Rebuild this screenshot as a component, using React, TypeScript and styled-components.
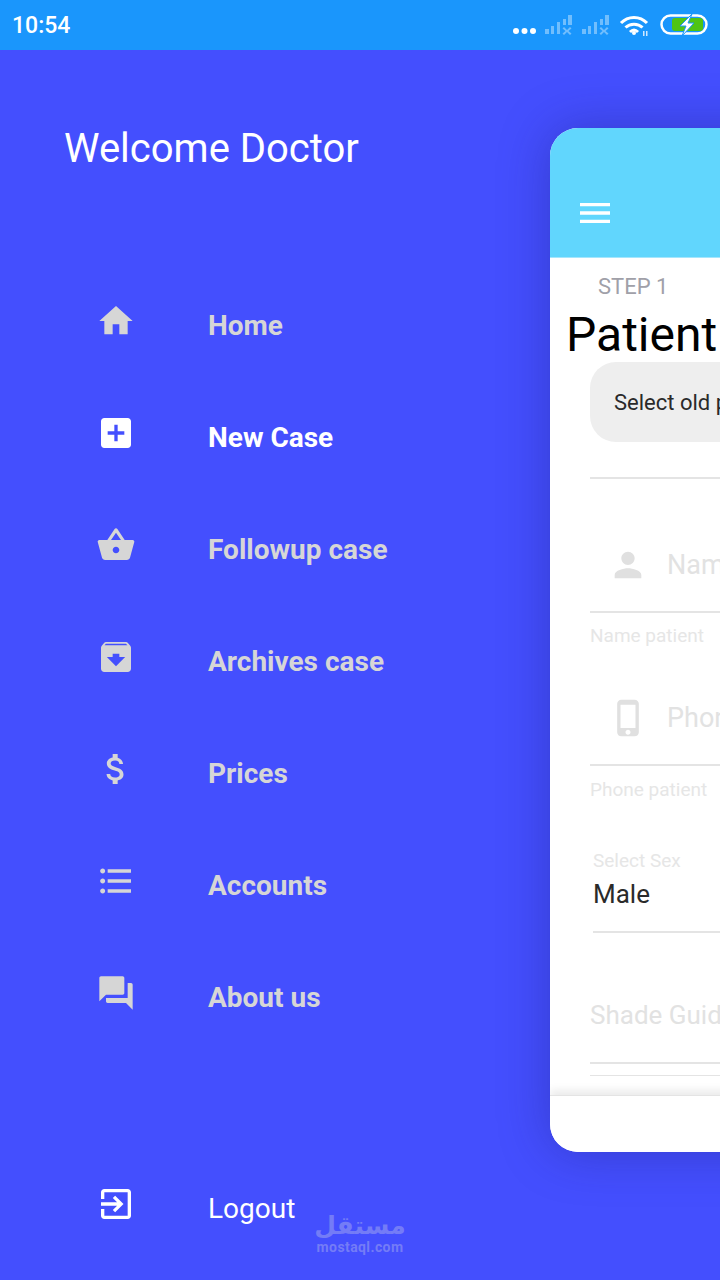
import styled, { createGlobalStyle } from 'styled-components';

const GlobalStyle = createGlobalStyle`
  html, body {
    margin: 0;
    padding: 0;
    background: #444ffe;
  }
  * {
    box-sizing: border-box;
  }
`;

const Screen = styled.div`
  position: relative;
  width: 720px;
  height: 1280px;
  overflow: hidden;
  background: #444ffe;
  font-family: Roboto, sans-serif;
`;

const StatusBar = styled.div`
  display: flex;
  align-items: center;
  justify-content: space-between;
  height: 50px;
  padding: 0 12px 0 12px;
  background: #1a96fc;
`;

const Clock = styled.span`
  color: #fff;
  font-size: 23px;
  font-weight: 500;
`;

const Drawer = styled.div`
  display: flex;
  flex-direction: column;
  padding: 74px 0 0 64px;
`;

const Welcome = styled.h1`
  margin: 0 0 95px;
  color: #fff;
  font-size: 40px;
  font-weight: 400;
  line-height: 50px;
`;

const Nav = styled.nav`
  display: flex;
  flex-direction: column;
  margin-left: 32px;
`;

const NavItem = styled.div<{ $last?: boolean }>`
  display: flex;
  align-items: center;
  gap: 72px;
  height: 112px;
  margin-top: ${(p) => (p.$last ? '99px' : '0')};
`;

const NavIcon = styled.svg<{ $active?: boolean }>`
  width: 40px;
  height: 40px;
  flex: none;
  margin-top: -8px;
  fill: ${(p) => (p.$active ? '#fff' : '#d6d6d6')};
`;

const NavLabel = styled.span<{ $active?: boolean }>`
  color: ${(p) => (p.$active ? '#fff' : '#d6d6d6')};
  font-size: 28px;
  font-weight: 700;
`;

const LogoutLabel = styled.span`
  color: #fff;
  font-size: 28px;
  font-weight: 400;
`;

const Card = styled.div`
  position: absolute;
  top: 128px;
  left: 550px;
  display: flex;
  flex-direction: column;
  width: 720px;
  height: 1024px;
  overflow: hidden;
  border-radius: 28px;
  background: #fff;
  box-shadow: 0 0 50px rgba(30, 30, 130, 0.4);
`;

const CardHeader = styled.div`
  display: flex;
  align-items: flex-end;
  flex: none;
  height: 130px;
  padding: 0 0 24px 25px;
  background: #61d6fd;
  border-bottom: 1px solid #a5e6fd;
`;

const MenuIcon = styled.svg`
  width: 40px;
  height: 40px;
  fill: #fff;
`;

const CardBody = styled.div`
  display: flex;
  flex-direction: column;
  flex: 1;
  padding-left: 40px;
`;

const Step = styled.div`
  margin: 15px 0 0 8px;
  color: #a0a0a8;
  font-size: 22px;
  line-height: 28px;
`;

const Title = styled.div`
  margin: 4px 0 0 -24px;
  color: #000;
  font-size: 48px;
  line-height: 60px;
  white-space: nowrap;
`;

const OldPatient = styled.div`
  display: flex;
  align-items: center;
  height: 80px;
  margin-top: -3px;
  padding-left: 24px;
  border-radius: 26px;
  background: #eee;
  color: #2a2a2a;
  font-size: 22px;
  white-space: nowrap;
`;

const Rule = styled.div<{ $top: number; $thin?: boolean }>`
  flex: none;
  height: ${(p) => (p.$thin ? 1 : 2)}px;
  margin-top: ${(p) => p.$top}px;
  background: #e4e4e4;
`;

const InputRow = styled.div<{ $top: number }>`
  display: flex;
  align-items: center;
  gap: 19px;
  height: 56px;
  margin-top: ${(p) => p.$top}px;
  padding-left: 18px;
  white-space: nowrap;
`;

const InputIcon = styled.svg`
  width: 40px;
  height: 40px;
  flex: none;
  fill: #e0e0e0;
`;

const Placeholder = styled.span`
  color: #e2e2e2;
  font-size: 27px;
`;

const HelperText = styled.div<{ $top: number; $indent?: number }>`
  margin: ${(p) => p.$top}px 0 0 ${(p) => p.$indent ?? 0}px;
  color: #e6e6e6;
  font-size: 19px;
  line-height: 24px;
`;

const SexValue = styled.div`
  margin: 5px 0 0 3px;
  color: #2a2a2a;
  font-size: 26px;
  line-height: 32px;
`;

const SexRule = styled(Rule)`
  margin-left: 3px;
`;

const ShadeText = styled(Placeholder)`
  margin-top: 66px;
  font-size: 26px;
  line-height: 32px;
  white-space: nowrap;
`;

const BottomBar = styled.div`
  flex: none;
  height: 57px;
  background: #fff;
  border-top: 1px solid #e4e4e4;
  box-shadow: 0 -5px 8px rgba(0, 0, 0, 0.08);
`;

const Watermark = styled.div`
  position: absolute;
  top: 1213px;
  left: 317px;
  display: flex;
  flex-direction: column;
  align-items: center;
  width: 86px;
  color: #747cf6;
`;

const WatermarkArabic = styled.span`
  font-family: 'DejaVu Sans', sans-serif;
  font-size: 25px;
  font-weight: 700;
  line-height: 26px;
`;

const WatermarkLatin = styled.span`
  font-family: Roboto, sans-serif;
  font-size: 14px;
  font-weight: 700;
  line-height: 16px;
  letter-spacing: 0.4px;
`;

const StatusIcons = styled.svg`
  width: 210px;
  height: 50px;
  margin-right: -12px;
`;

const navItems = [
  { label: 'Home', d: 'M10 20v-6h4v6h5v-8h3L12 3 2 12h3v8z' },
  {
    label: 'New Case',
    active: true,
    d: 'M19 3H5c-1.11 0-2 .9-2 2v14c0 1.1.89 2 2 2h14c1.1 0 2-.9 2-2V5c0-1.1-.9-2-2-2zm-2 10h-4v4h-2v-4H7v-2h4V7h2v4h4v2z',
  },
  {
    label: 'Followup case',
    d: 'M17.21 9l-4.38-6.56c-.19-.28-.51-.42-.83-.42-.32 0-.64.14-.83.43L6.79 9H2c-.55 0-1 .45-1 1 0 .09.01.18.04.27l2.54 9.27c.23.84 1 1.46 1.92 1.46h13c.92 0 1.69-.62 1.93-1.46l2.54-9.27L23 10c0-.55-.45-1-1-1h-4.79zM9 9l3-4.4L15 9H9zm3 8c-1.1 0-2-.9-2-2s.9-2 2-2 2 .9 2 2-.9 2-2 2z',
  },
  {
    label: 'Archives case',
    d: 'M20.54 5.23l-1.39-1.68C18.88 3.21 18.47 3 18 3H6c-.47 0-.88.21-1.16.55L3.46 5.23C3.17 5.57 3 6.02 3 6.5V19c0 1.1.9 2 2 2h14c1.1 0 2-.9 2-2V6.5c0-.48-.17-.93-.46-1.27zM12 17.5L6.5 12H10v-2h4v2h3.5L12 17.5zM5.12 5l.81-1h12l.94 1H5.12z',
  },
  {
    label: 'Prices',
    d: 'M11.8 10.9c-2.27-.59-3-1.2-3-2.15 0-1.09 1.01-1.85 2.7-1.85 1.78 0 2.44.85 2.5 2.1h2.21c-.07-1.72-1.12-3.3-3.21-3.81V3h-3v2.16c-1.94.42-3.5 1.68-3.5 3.61 0 2.31 1.91 3.46 4.7 4.13 2.5.6 3 1.48 3 2.41 0 .69-.49 1.79-2.7 1.79-2.06 0-2.87-.92-2.98-2.1h-2.2c.12 2.19 1.76 3.42 3.68 3.83V21h3v-2.15c1.95-.37 3.5-1.5 3.5-3.55 0-2.84-2.43-3.81-4.7-4.4z',
  },
  {
    label: 'Accounts',
    d: 'M4 10.5c-.83 0-1.5.67-1.5 1.5s.67 1.5 1.5 1.5 1.5-.67 1.5-1.5-.67-1.5-1.5-1.5zm0-6c-.83 0-1.5.67-1.5 1.5S3.17 7.500 4 7.500 5.500 6.830 5.500 6 4.830 4.500 4 4.500zm0 12c-.83 0-1.5.68-1.5 1.500s.68 1.500 1.500 1.500 1.500-.68 1.500-1.500-.67-1.500-1.500-1.500zM7 19h14v-2H7v2zm0-6h14v-2H7v2zm0-8v2h14V5H7z',
  },
  {
    label: 'About us',
    d: 'M21 6h-2v9H6v2c0 .55.45 1 1 1h11l4 4V7c0-.55-.45-1-1-1zm-4 6V3c0-.55-.45-1-1-1H3c-.55 0-1 .45-1 1v14l4-4h10c.55 0 1-.45 1-1z',
  },
];

function SignalBars({ x }: { x: number }) {
  return (
    <g transform={`translate(${x} 0)`} fill="#fff" opacity="0.38">
      <rect x="0" y="29" width="4" height="5" />
      <rect x="6" y="26" width="3" height="8" />
      <rect x="12" y="22" width="3" height="12" />
      <rect x="18" y="19" width="3" height="6" />
      <rect x="23" y="15" width="4" height="10" />
      <path d="M19 27l3 3 3-3 1.500 1.500-3 2.500 3 2.500-1.500 1.500-3-3-3 3-1.500-1.500 3-2.500-3-2.500z" />
    </g>
  );
}

export default function App() {
  return (
    <Screen>
      <GlobalStyle />
      <StatusBar>
        <Clock>10:54</Clock>
        <StatusIcons viewBox="510 0 210 50">
          <circle cx="516" cy="31" r="3" fill="#fff" />
          <circle cx="524.500" cy="31" r="3" fill="#fff" />
          <circle cx="533" cy="31" r="3" fill="#fff" />
          <SignalBars x={545} />
          <SignalBars x={582} />
          <g fill="none" stroke="#fff" strokeWidth="3">
            <path d="M621 23c7-7.500 19-7.500 26 0" />
            <path d="M625.500 27.500c4.500-4.500 12.500-4.500 17 0" />
            <path d="M630 32c2.500-2.500 5.500-2.500 8 0" />
          </g>
          <circle cx="634" cy="33" r="2" fill="#fff" />
          <path d="M643 31h1.500v5H643zM646 31h1.500v5H646z" fill="#cfe8ff" />
          <rect x="661.500" y="15.500" width="45" height="18" rx="9" fill="none" stroke="#fff" strokeWidth="2.500" />
          <rect x="672" y="18" width="31" height="13" rx="3" fill="#4fc414" />
          <path d="M692 14l-12 12h6l-4 10 12-13h-6z" fill="#fff" stroke="#1a96fc" strokeWidth="1" />
        </StatusIcons>
      </StatusBar>
      <Drawer>
        <Welcome>Welcome Doctor</Welcome>
        <Nav>
          {navItems.map((item) => (
            <NavItem key={item.label}>
              <NavIcon viewBox="0 0 24 24" $active={item.active}>
                <path d={item.d} />
              </NavIcon>
              <NavLabel $active={item.active}>{item.label}</NavLabel>
            </NavItem>
          ))}
          <NavItem $last>
            <NavIcon viewBox="0 0 24 24" $active>
              <path d="M10.090 15.590L11.500 17l5-5-5-5-1.410 1.410L12.670 11H3v2h9.670l-2.580 2.590zM19 3H5c-1.110 0-2 .9-2 2v4h2V5h14v14H5v-4H3v4c0 1.100.89 2 2 2h14c1.100 0 2-.9 2-2V5c0-1.100-.9-2-2-2z" />
            </NavIcon>
            <LogoutLabel>Logout</LogoutLabel>
          </NavItem>
        </Nav>
      </Drawer>
      <Card>
        <CardHeader>
          <MenuIcon viewBox="0 0 24 24">
            <path d="M3 18h18v-2H3v2zm0-5h18v-2H3v2zm0-7v2h18V6H3z" />
          </MenuIcon>
        </CardHeader>
        <CardBody>
          <Step>STEP 1</Step>
          <Title>Patient</Title>
          <OldPatient>Select old patient</OldPatient>
          <Rule $top={35} />
          <InputRow $top={58}>
            <InputIcon viewBox="0 0 24 24">
              <path d="M12 12c2.210 0 4-1.790 4-4s-1.790-4-4-4-4 1.790-4 4 1.790 4 4 4zm0 2c-2.670 0-8 1.340-8 4v2h16v-2c0-2.660-5.330-4-8-4z" />
            </InputIcon>
            <Placeholder>Name</Placeholder>
          </InputRow>
          <Rule $top={18} />
          <HelperText $top={11}>Name patient</HelperText>
          <InputRow $top={42}>
            <InputIcon viewBox="-0.5 0 24 24">
              <path d="M15.500 1h-8C6.120 1 5 2.120 5 3.500v17C5 21.880 6.120 23 7.500 23h8c1.380 0 2.500-1.120 2.500-2.500v-17C18 2.120 16.880 1 15.500 1zm-4 21c-.83 0-1.500-.67-1.500-1.500s.67-1.500 1.500-1.500 1.500.67 1.500 1.500-.67 1.500-1.500 1.500zm4.500-4H7V4h9v14z" />
            </InputIcon>
            <Placeholder>Phone</Placeholder>
          </InputRow>
          <Rule $top={18} />
          <HelperText $top={12}>Phone patient</HelperText>
          <HelperText $top={47} $indent={3}>Select Sex</HelperText>
          <SexValue>Male</SexValue>
          <SexRule $top={21} />
          <ShadeText>Shade Guide</ShadeText>
          <Rule $top={31} />
          <Rule $top={11} $thin />
        </CardBody>
        <BottomBar />
      </Card>
      <Watermark>
        <WatermarkArabic>مستقل</WatermarkArabic>
        <WatermarkLatin>mostaql.com</WatermarkLatin>
      </Watermark>
    </Screen>
  );
}
